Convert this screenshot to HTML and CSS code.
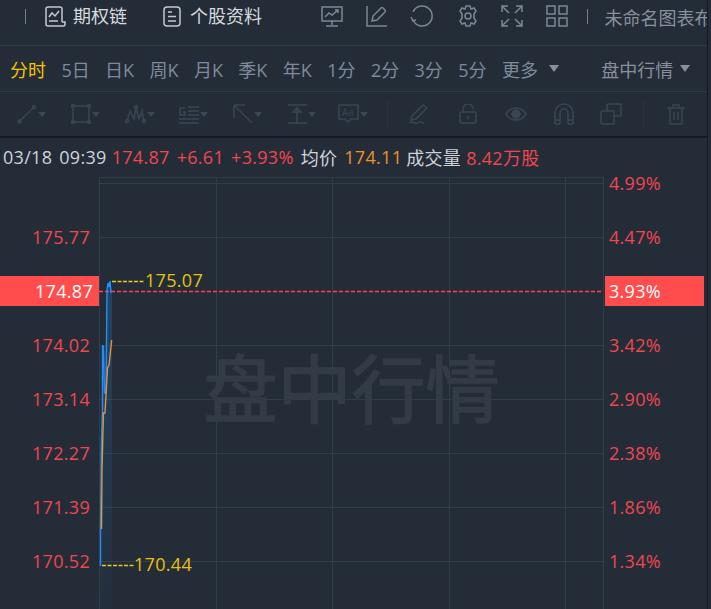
FILE: index.html
```html
<!DOCTYPE html>
<html>
<head>
    <title>盘中行情</title>
    <link rel="stylesheet" href="styles.css">
</head>
<body>
<div class="page">
    <div class="top-bar">
        <span class="divider first"></span>
        <svg class="main-icon" width="21" height="21" viewBox="0 0 21 21"><path d="M17 16V3a2 2 0 0 0-2-2H3a2 2 0 0 0-2 2v15a2 2 0 0 0 2 2h15.500a1.500 1.500 0 0 0 1.500-1.500V16h-3"/><path d="M4 11l3-4 3 3 4-5"/><path d="M4 15h9"/></svg>
        <span class="main-link">期权链</span>
        <svg class="main-icon second" width="18" height="21" viewBox="0 0 18 21"><rect x="1" y="1" width="16" height="19" rx="3"/><path d="M5 6h4M5 10.500h8M5 15h8"/></svg>
        <span class="main-link">个股资料</span>
        <div class="icon-group">
            <svg width="22" height="22" viewBox="0 0 22 22"><rect x="1" y="2" width="20" height="14"/><path d="M4 12l4-4 3 2 6-5M14 5h3v3M11 16v4M5 21h12"/></svg>
            <svg width="22" height="22" viewBox="0 0 22 22"><path d="M1 1v20h20M6 16l1-5L15 3a1.500 1.500 0 0 1 2 0l2 2a1.500 1.500 0 0 1 0 2l-8 8z"/></svg>
            <svg width="24" height="22" viewBox="0 0 24 22"><path d="M3 7a10 10 0 1 1 0 8"/><path d="M3 16l-2-4M2 16l4-1"/></svg>
            <svg width="22" height="22" viewBox="0 0 22 22"><path d="M9 1h4l1 3 3-1 2 3-2 3v4l2 3-2 3-3-1-1 3H9l-1-3-3 1-2-3 2-3V9L3 6l2-3 3 1z"/><circle cx="11" cy="11" r="3"/></svg>
            <svg width="22" height="22" viewBox="0 0 22 22"><path d="M1 7V1h6M2 2l6 6M15 1h6v6M20 2l-6 6M1 15v6h6M2 20l6-6M21 15v6h-6M20 20l-6-6"/></svg>
            <svg width="22" height="22" viewBox="0 0 22 22"><path d="M1 1h8v8H1zM13 1h8v8h-8zM1 13h8v8H1zM13 13h8v8h-8z"/></svg>
        </div>
        <span class="divider last"></span>
        <span class="chart-name">未命名图表布</span>
    </div>

    <div class="period-bar">
        <span class="period active">分时</span>
        <span class="period">5日</span>
        <span class="period">日K</span>
        <span class="period">周K</span>
        <span class="period">月K</span>
        <span class="period">季K</span>
        <span class="period">年K</span>
        <span class="period">1分</span>
        <span class="period">2分</span>
        <span class="period">3分</span>
        <span class="period">5分</span>
        <span class="period">更多</span>
        <span class="caret big"></span>
        <span class="market">盘中行情</span>
        <span class="caret big near"></span>
    </div>

    <div class="tool-bar">
        <span class="tool"><svg width="20" height="20" viewBox="0 0 20 20"><path d="M2 18L17 3"/><circle cx="2.500" cy="17.500" r="1.500"/><circle cx="17" cy="3" r="1.500"/></svg><i class="caret"></i></span>
        <span class="tool"><svg width="20" height="20" viewBox="0 0 20 20"><rect x="2" y="2" width="16" height="16"/><circle cx="2" cy="2" r="1.500"/><circle cx="18" cy="2" r="1.500"/><circle cx="2" cy="18" r="1.500"/><circle cx="18" cy="18" r="1.500"/></svg><i class="caret"></i></span>
        <span class="tool"><svg width="21" height="20" viewBox="0 0 21 20"><path d="M2 17L5 7l4 8 2-12 3 12 3-8 2 10"/><circle cx="2" cy="17" r="1.500"/><circle cx="11" cy="3" r="1.500"/><circle cx="19" cy="17" r="1.500"/></svg><i class="caret"></i></span>
        <span class="tool"><svg width="20" height="20" viewBox="0 0 20 20"><path d="M9 3h11M9 7h11M9 11h11M0 15h20M0 19h20M6 4H1v7h5V8H4"/></svg><i class="caret"></i></span>
        <span class="tool"><svg width="20" height="20" viewBox="0 0 20 20"><path d="M1 1h11M1 1v13M1 1l18 18"/></svg><i class="caret"></i></span>
        <span class="tool t-bar"><svg width="20" height="20" viewBox="0 0 20 20"><path d="M1 1h19M1 19h19M10 3v16M6 8l4-4 4 4z"/></svg><i class="caret"></i></span>
        <span class="tool"><svg width="21" height="20" viewBox="0 0 21 20"><path d="M1 1h19v14h-7l-3 3-3-3H1z"/><text class="aa" x="4" y="12">Aa</text></svg><i class="caret"></i></span>
        <span class="tool-sep"></span>
        <span class="tool pen"><svg width="22" height="22" viewBox="0 0 22 22"><path d="M4 13L15 2l4 3L8 16l-5 1zM1 20c4-3 6 2 9 0s4-1 6 1"/></svg></span>
        <span class="tool lock"><svg width="18" height="20" viewBox="0 0 18 20"><rect x="1" y="8" width="16" height="11" rx="2"/><path d="M4 8V5a5 5 0 0 1 10 0M9 12v3"/></svg></span>
        <span class="tool eye"><svg width="22" height="20" viewBox="0 0 22 20"><path d="M1 10c5-8 15-8 20 0-5 8-15 8-20 0z"/><circle class="solid" cx="11" cy="10" r="4"/></svg></span>
        <span class="tool lock"><svg width="20" height="22" viewBox="0 0 20 22"><path d="M1 20V10a9 9 0 0 1 18 0v10a1 1 0 0 1-1 1h-3a1 1 0 0 1-1-1V10a4 4 0 0 0-8 0v10a1 1 0 0 1-1 1H2a1 1 0 0 1-1-1zM1 17h5M14 17h5"/></svg></span>
        <span class="tool copy"><svg width="22" height="22" viewBox="0 0 22 22"><path d="M7 8V2a1 1 0 0 1 1-1h12a1 1 0 0 1 1 1v10a1 1 0 0 1-1 1h-6"/><rect x="1" y="8" width="13" height="13" rx="1"/></svg></span>
        <span class="tool-sep late"></span>
        <span class="tool"><svg width="18" height="21" viewBox="0 0 18 21"><path d="M0 4h18M6 4V1h6v3M3 4v15a1 1 0 0 0 1 1h10a1 1 0 0 0 1-1V4M7 8v8M11 8v8"/></svg></span>
    </div>

    <div class="status-bar">
        <span class="time stamp">03/18 09:39</span>
        <span class="up">174.87</span>
        <span class="up">+6.61</span>
        <span class="up">+3.93%</span>
        <span class="time">均价</span>
        <span class="avg">174.11</span>
        <span class="time volume">成交量</span>
        <span class="up">8.42万股</span>
    </div>

    <div class="chart">
        <div class="axis left-axis">
            <span>175.77</span>
            <span class="tag">174.87</span>
            <span>174.02</span>
            <span>173.14</span>
            <span>172.27</span>
            <span>171.39</span>
            <span>170.52</span>
        </div>
        <svg class="plot" width="505" height="438" viewBox="99 171 505 438">
            <defs>
                <linearGradient id="areaFill" x1="0" y1="0" x2="0" y2="1">
                    <stop offset="0" stop-color="#1f7fd0" stop-opacity=".3"/>
                    <stop offset="1" stop-color="#1f7fd0" stop-opacity=".02"/>
                </linearGradient>
            </defs>
            <path class="grid" d="M99 177.500H603.500M99 183.500H603.500M99 237.500H603.500M99 345.500H603.500M99 399.500H603.500M99 453.500H603.500M99 507.500H603.500M99 561.500H603.500"/>
            <path class="grid" d="M99.500 177V609M216.500 177V609M332.500 177V609M449.500 177V609M565.500 177V609M603.500 177V609"/>
            <text class="watermark" x="351.500" y="417" text-anchor="middle">盘中行情</text>
            <path class="last-line" d="M99 291.500H603"/>
            <path class="area" d="M100 566V530L102 346L105 393L107 290L108 283L110 281L112 293V609H100z"/>
            <path class="price" d="M100.500 566V530L101.500 440L102.500 410V346H103.500L104.500 393H106L107 290L108 283L109 287L110 281L111 293"/>
            <path class="average" d="M101.500 529L102 470L103 430L103.500 413H105L107.500 368L109 365L111.700 340"/>
            <path class="mark" d="M112 281.500H145M102 565.500H134"/>
            <text class="mark-text" x="145" y="287">175.07</text>
            <text class="mark-text" x="134" y="571">170.44</text>
        </svg>
        <div class="axis right-axis">
            <span>4.99%</span>
            <span>4.47%</span>
            <span class="tag">3.93%</span>
            <span>3.42%</span>
            <span>2.90%</span>
            <span>2.38%</span>
            <span>1.86%</span>
            <span>1.34%</span>
        </div>
    </div>
</div>
</body>
</html>
```

FILE: styles.css
```css
html, body {
    margin: 0;
    height: 100%;
    overflow: hidden;
    background-color: #242c38;
}
body {
    font-family: "Open Sans", "Noto Sans CJK SC", "Liberation Sans", sans-serif;
    font-size: 18px;
}
.page {
    width: 707px;
    height: 609px;
    border-right: 1px solid #161b22;
    overflow: hidden;
    display: flex;
    flex-direction: column;
}

/* top bar */
.top-bar {
    flex: none;
    height: 32px;
    padding-bottom: 13px;
    border-bottom: 1px solid #2f3a45;
    display: flex;
    align-items: center;
    padding-left: 25px;
    white-space: nowrap;
    overflow: hidden;
}
.top-bar svg {
    fill: none;
    stroke: #7d8694;
    stroke-width: 1.5;
    flex: none;
}
.divider {
    flex: none;
    width: 1px;
    height: 15px;
    background-color: #76808c;
}
.divider.last {
    margin-left: 19px;
}
.top-bar svg.main-icon {
    stroke: #c4c9cf;
    margin-left: 19px;
    margin-right: 7px;
}
.top-bar svg.main-icon.second {
    margin-left: 36px;
    margin-right: 9px;
}
.main-link {
    margin-top: -2px;
    color: #d6dade;
}
.icon-group {
    display: flex;
    align-items: center;
    gap: 22.5px;
    margin-left: 59px;
}
.chart-name {
    margin-left: 17px;
    margin-top: 2px;
    color: #87909c;
}

/* period row */
.period-bar {
    flex: none;
    height: 45px;
    border-bottom: 1px solid #2f3a45;
    display: flex;
    align-items: center;
    padding-left: 10px;
    white-space: nowrap;
}
.period {
    margin-right: 15.4px;
    color: #7d8a9c;
}
.period.active {
    color: #f5c400;
}
.market {
    margin-left: 42px;
    color: #87909c;
}
.caret {
    flex: none;
    width: 0;
    height: 0;
    border-left: 4px solid transparent;
    border-right: 4px solid transparent;
    border-top: 5px solid #3d4654;
}
.caret.big {
    border-left-width: 5px;
    border-right-width: 5px;
    border-top: 7px solid #87909c;
    margin-left: -4px;
}
.caret.near {
    margin-left: 7px;
}

/* drawing tools */
.tool-bar {
    flex: none;
    height: 44px;
    border-bottom: 2px solid #171c24;
    display: flex;
    align-items: center;
    padding-left: 17px;
}
.tool {
    flex: none;
    width: 54px;
    display: flex;
    align-items: center;
    gap: 1px;
}
.tool.t-bar {
    width: 51px;
}
.tool.pen {
    width: 51px;
}
.tool.lock {
    width: 46px;
}
.tool.eye {
    width: 49px;
}
.tool.copy {
    width: 43px;
}
.tool svg {
    flex: none;
    fill: none;
    stroke: #3b4452;
    stroke-width: 1.5;
}
.tool svg .solid {
    fill: #3b4452;
}
.tool svg .aa {
    fill: #3b4452;
    stroke: none;
    font-size: 10px;
}
.tool-sep {
    flex: none;
    width: 1px;
    height: 28px;
    margin-left: -5px;
    margin-right: 20px;
    background-color: #2b3340;
}
.tool-sep.late {
    margin-left: 0;
    margin-right: 23px;
}

/* status row */
.status-bar {
    flex: none;
    height: 33px;
    display: flex;
    align-items: center;
    gap: 7px;
    padding-left: 3px;
    padding-top: 4px;
    box-sizing: border-box;
    white-space: nowrap;
    letter-spacing: .3px;
}
.time {
    color: #cfd3d8;
}
.time.stamp {
    word-spacing: 2px;
    margin-right: -2px;
}
.time.volume {
    margin-right: -2px;
}
.up {
    color: #f0474f;
}
.avg {
    margin-right: -3px;
    color: #f0902a;
}

/* chart */
.chart {
    flex: 1;
    min-height: 0;
    display: flex;
}
.axis {
    flex: none;
    display: flex;
    flex-direction: column;
    gap: 30px;
    color: #f0474f;
    letter-spacing: .3px;
}
.axis span {
    height: 24px;
    line-height: 24px;
    display: block;
}
.axis .tag {
    height: 30px;
    line-height: 30px;
    margin: -3px 0;
    background-color: #ff4d4d;
    color: #fff;
}
.left-axis {
    width: 99px;
    padding-top: 54px;
    text-align: right;
}
.left-axis span {
    padding-right: 9px;
}
.left-axis .tag {
    padding-right: 6px;
}
.right-axis {
    width: 103px;
    padding-left: 1px;
    box-sizing: border-box;
}
.right-axis span {
    padding-left: 4px;
}
.right-axis .tag {
    width: 99px;
    box-sizing: border-box;
    padding-left: 4px;
}
.plot {
    flex: none;
    width: 505px;
    height: 438px;
}
.grid {
    fill: none;
    stroke: #323d4a;
    stroke-width: 1;
}
.watermark {
    fill: #333b47;
    stroke: #333b47;
    stroke-width: 1.5;
    font-size: 74px;
}
.last-line {
    fill: none;
    stroke: #ff4545;
    stroke-width: 1.5;
    stroke-dasharray: 4 2;
}
.area {
    fill: url(#areaFill);
}
.price {
    fill: none;
    stroke: #1f8fff;
    stroke-width: 1.4;
}
.average {
    fill: none;
    stroke: #e8912f;
    stroke-width: 1.4;
}
.mark {
    fill: none;
    stroke: #f0c814;
    stroke-width: 1.3;
    stroke-dasharray: 4 1.500;
}
.mark-text {
    fill: #e8c010;
    font-size: 18px;
    letter-spacing: .3px;
}
```
